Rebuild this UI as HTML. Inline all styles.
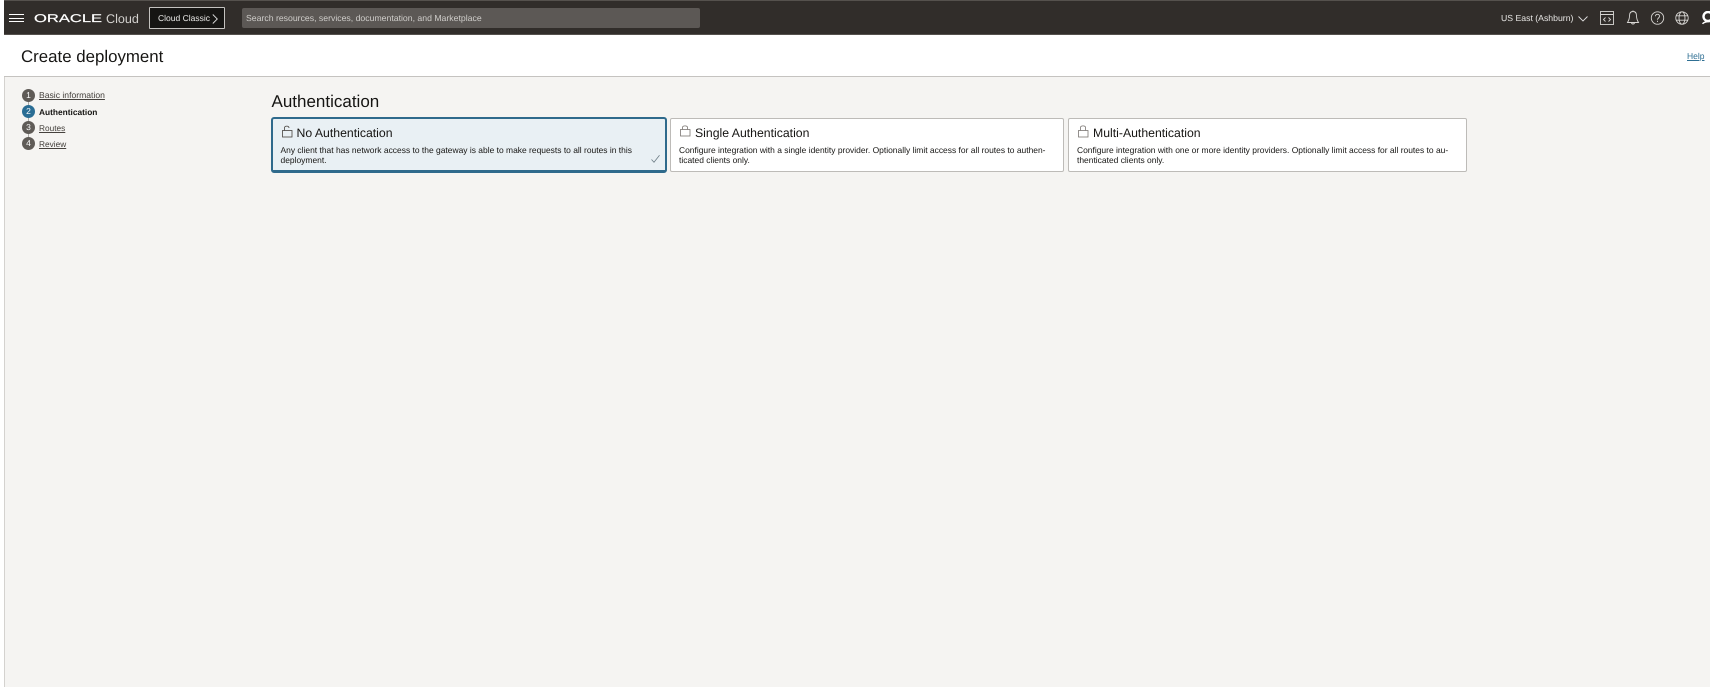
<!DOCTYPE html>
<html lang="en"><head><meta charset="utf-8"><title>Create deployment</title>
<style>
*{box-sizing:border-box}
html,body{margin:0;padding:0;width:1710px;height:690px;overflow:hidden;background:#fff;font-family:"Liberation Sans",Arial,sans-serif;color:#161513;text-rendering:geometricPrecision}
.a{position:absolute;white-space:nowrap}
#root{position:absolute;left:0;top:0;width:1710px;height:690px;filter:blur(.35px)}
a{color:inherit}
.card{position:absolute;top:118px;height:54px;background:#fff;border:1px solid #bdbbb8;border-radius:2px}
.ct{font-size:12.25px;line-height:16px;color:#161513}
.cd{font-size:8.46px;line-height:10px;color:#161513}
.num{position:absolute;left:22px;width:13px;height:13px;border-radius:50%;background:#5f5b57;color:#fff;font-size:8.5px;line-height:13px;text-align:center}
.st{font-size:8.6px;line-height:12px;color:#45413d;text-decoration:underline}
</style></head><body>
<div id="root">
<div class="a" style="left:4px;top:0;width:1706px;height:687px;background:#f5f4f2;border-left:1px solid #d4d2cf"></div>
<div class="a" style="left:4px;top:0;width:1706px;height:35px;background:#312d2a;border-top:1px solid #55514d;border-bottom:1px solid #55514d"></div>
<div class="a" style="left:4px;top:35px;width:1706px;height:42px;background:#fff;border-bottom:1px solid #c5c3c0"></div>

<div class="a" style="left:9px;top:14px;width:15px;height:1.4px;background:#fff"></div>
<div class="a" style="left:9px;top:17.5px;width:15px;height:1.4px;background:#fff"></div>
<div class="a" style="left:9px;top:21px;width:15px;height:1.4px;background:#fff"></div>
<div class="a" style="left:34px;top:11.6px;font-size:11.2px;line-height:14px;color:#fff;transform:scaleX(1.48);transform-origin:0 0;-webkit-text-stroke:.2px #fff">ORACLE</div>
<div class="a" style="left:106px;top:9.5px;font-size:12.6px;line-height:18px;color:#d4d2cf">Cloud</div>
<div class="a" style="left:149px;top:7px;width:76px;height:22px;background:#161513;border:1px solid #c4c2bf;border-radius:1px"></div>
<div class="a" style="left:158px;top:12px;font-size:8.5px;line-height:12px;color:#e8e7e5">Cloud Classic</div>
<svg class="a" style="left:212px;top:13px" width="6" height="12" viewBox="0 0 6 12"><path d="M.8 1.500l4.500 4.500-4.500 4.500" fill="none" stroke="#ddd" stroke-width=".9"/></svg>
<div class="a" style="left:242px;top:8px;width:458px;height:20px;background:#5c5855;border-radius:2px"></div>
<div class="a" style="left:246px;top:12px;font-size:8.7px;line-height:12px;color:#cfcdca">Search resources, services, documentation, and Marketplace</div>

<div class="a" style="left:1501px;top:12px;font-size:8.7px;line-height:12px;color:#e8e7e5">US East (Ashburn)</div>
<svg class="a" style="left:1577px;top:14.5px" width="12" height="8" viewBox="0 0 12 8"><path d="M1.500 1.500l4.500 4.500 4.500-4.500" fill="none" stroke="#ddd" stroke-width=".9"/></svg>
<svg class="a" style="left:1599px;top:10px" width="16" height="16" viewBox="0 0 16 16" fill="none" stroke="#d8d6d3" stroke-width=".9"><rect x="1.500" y="1.500" width="13" height="13"/><path d="M1.500 4.500h13M6.500 7.500l-2 2 2 2M9.500 7.500l2 2-2 2" /></svg>
<svg class="a" style="left:1624.5px;top:9px" width="16" height="17" viewBox="0 0 16 17" fill="none" stroke="#d8d6d3" stroke-width=".9"><path d="M8 2.500c-2.800 0-3.500 2.300-3.500 4.200 0 3-.8 4.800-2 6.800h11c-1.200-2-2-3.800-2-6.800C11.500 4.800 10.800 2.500 8 2.500zM8 1.500v1M6.500 13.500c0 2 3 2 3 0"/></svg>
<svg class="a" style="left:1650px;top:11px" width="15" height="15" viewBox="0 0 15 15" fill="none" stroke="#d8d6d3" stroke-width=".9"><circle cx="7.500" cy="7" r="6.200"/><path d="M5.500 5.300c0-2.700 4-2.700 4 0 0 1.700-2 1.700-2 3.400M7.500 9.800v1.200"/></svg>
<svg class="a" style="left:1675px;top:11px" width="15" height="15" viewBox="0 0 15 15" fill="none" stroke="#d8d6d3" stroke-width=".9"><circle cx="7" cy="7" r="6.200"/><ellipse cx="7" cy="7" rx="3" ry="6.200"/><path d="M1 4.800h12M1 9.200h12"/></svg>
<svg class="a" style="left:1701px;top:11px" width="9" height="15" viewBox="0 0 9 15"><circle cx="7" cy="5.500" r="4.500" fill="none" stroke="#fff" stroke-width="2.400"/><path d="M1.500 12.800c1.500-1.800 3.500-2.300 7.500-2.300" fill="none" stroke="#fff" stroke-width="1.500"/></svg>

<div class="a" style="left:21px;top:46px;font-size:16.85px;line-height:22px;color:#161513">Create deployment</div>
<div class="a" style="left:1687px;top:49.5px;font-size:8.5px;line-height:12px;color:#2f6f93;text-decoration:underline">Help</div>

<div class="a" style="left:28px;top:95px;width:1px;height:49px;background:#aaa8a5"></div>
<div class="num" style="top:89px">1</div>
<div class="num" style="top:105px;background:#2a6d94">2</div>
<div class="num" style="top:121px">3</div>
<div class="num" style="top:137px">4</div>
<div class="a st" style="left:39px;top:89px">Basic information</div>
<div class="a" style="left:39px;top:105.5px;font-size:8.35px;line-height:12px;font-weight:bold;color:#161513">Authentication</div>
<div class="a st" style="left:39px;top:122px;font-size:8.3px">Routes</div>
<div class="a st" style="left:39px;top:138px;font-size:8.3px">Review</div>

<div class="a" style="left:271.5px;top:92px;font-size:17px;line-height:20px;color:#161513">Authentication</div>

<div class="card" style="left:271px;top:117px;width:396px;height:56px;background:#e9f0f4;border:2px solid #2f6a8c;border-bottom-width:3px;border-radius:3px"></div>
<svg class="a" style="left:281px;top:125px" width="12" height="13" viewBox="0 0 12 13" fill="none" stroke="#45413d" stroke-width=".8"><rect x="1.500" y="5.500" width="9.500" height="6.500"/><path d="M3.500 5.500V3c0-2.500 4.500-2.500 4.500 0"/></svg>
<div class="a ct" style="left:296.5px;top:124.5px">No Authentication</div>
<div class="a cd" style="left:280.5px;top:144.5px">Any client that has network access to the gateway is able to make requests to all routes in this</div>
<div class="a cd" style="left:280.5px;top:154.5px">deployment.</div>
<svg class="a" style="left:650px;top:154px" width="11" height="10" viewBox="0 0 11 10"><path d="M1.500 5.500l2.500 2.800 5.500-7" fill="none" stroke="#6b7b84" stroke-width=".8"/></svg>

<div class="card" style="left:670px;width:394px"></div>
<svg class="a" style="left:679px;top:125px" width="12" height="13" viewBox="0 0 12 13" fill="none" stroke="#7a7672" stroke-width=".8"><rect x="1.500" y="4.500" width="9.500" height="6.500"/><path d="M3.500 4.500V2.500c0-2.200 5-2.200 5 0v2"/></svg>
<div class="a ct" style="left:695px;top:124.5px">Single Authentication</div>
<div class="a cd" style="left:679px;top:144.5px">Configure integration with a single identity provider. Optionally limit access for all routes to authen-</div>
<div class="a cd" style="left:679px;top:154.5px">ticated clients only.</div>

<div class="card" style="left:1068px;width:399px"></div>
<svg class="a" style="left:1077px;top:125px" width="12" height="13" viewBox="0 0 12 13" fill="none" stroke="#7a7672" stroke-width=".8"><rect x="1.500" y="5.500" width="9.500" height="6.500"/><path d="M3.500 5.500V2.500c0-2.200 5-2.200 5 0v3"/></svg>
<div class="a ct" style="left:1093px;top:124.5px">Multi-Authentication</div>
<div class="a cd" style="left:1077px;top:144.5px">Configure integration with one or more identity providers. Optionally limit access for all routes to au-</div>
<div class="a cd" style="left:1077px;top:154.5px">thenticated clients only.</div>
</div>
</body></html>
